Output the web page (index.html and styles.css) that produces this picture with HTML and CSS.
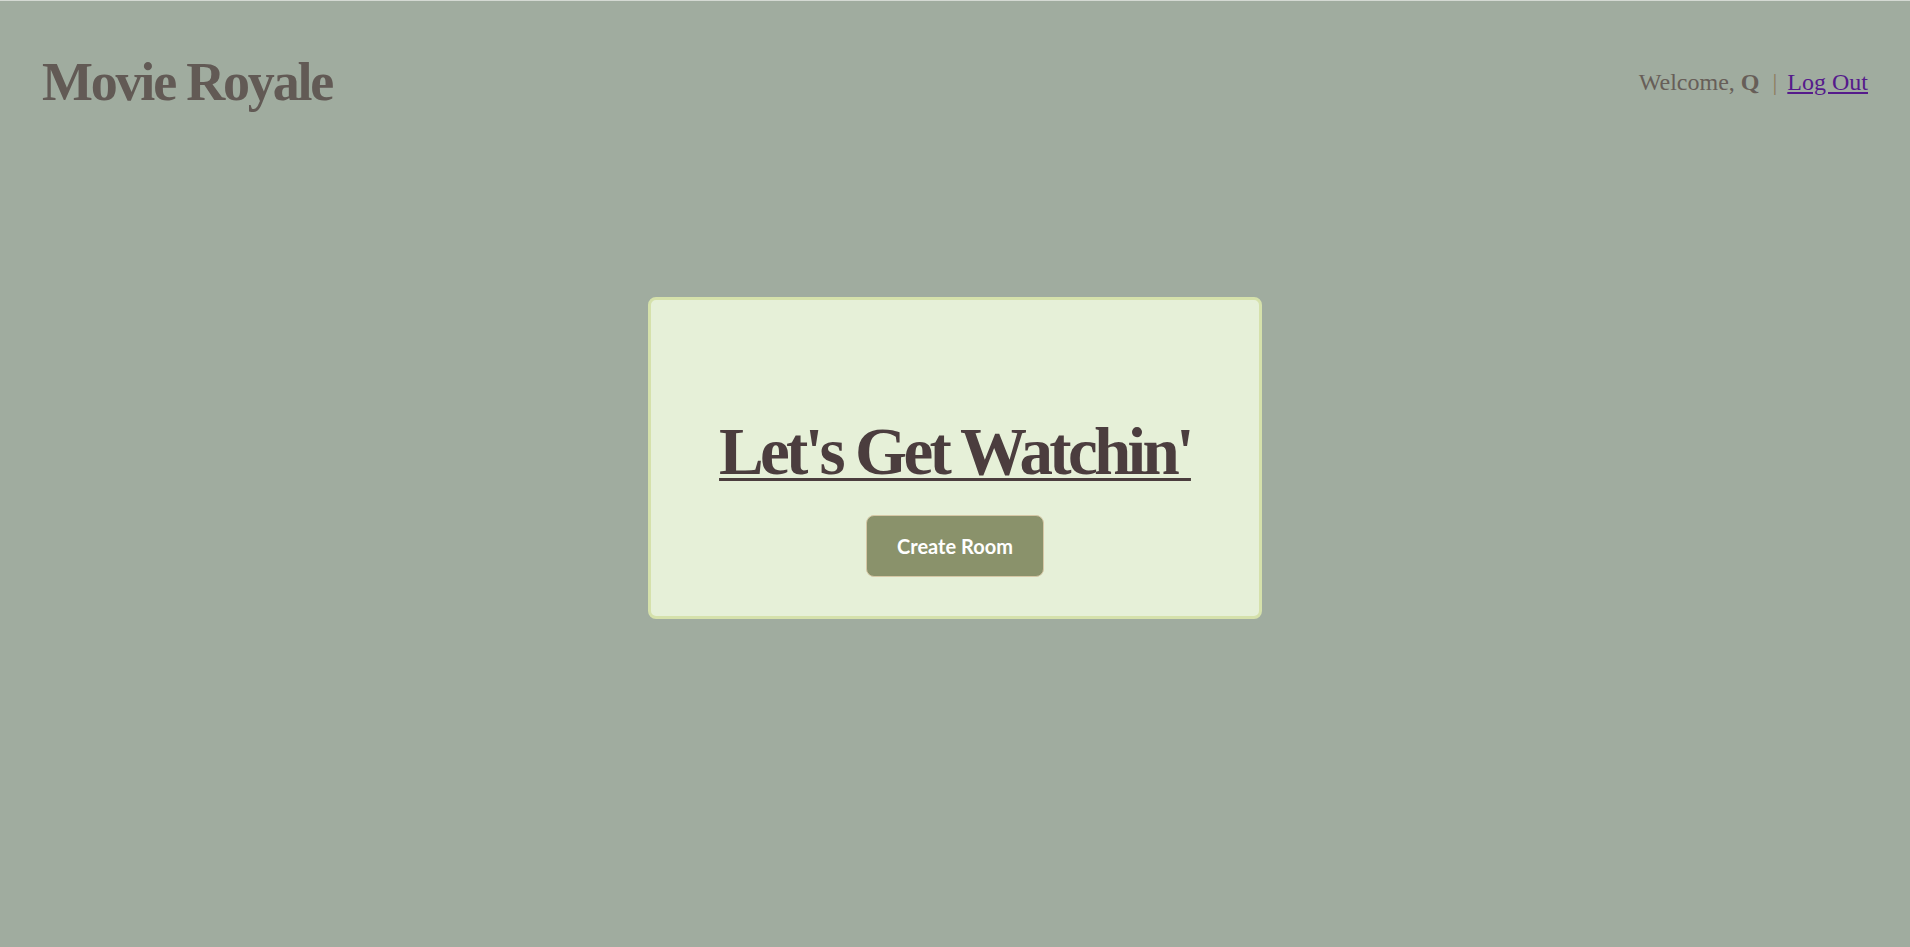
FILE: index.html
```html
<!DOCTYPE html>
<html lang="en">
<head>
<meta charset="utf-8">
<title>Movie Royale</title>
<link rel="stylesheet" href="styles.css">
</head>
<body>
<div class="topline"></div>
<header class="header">
  <h1 class="logo">Movie Royale</h1>
  <div class="welcome">Welcome, <b>Q</b><span class="sep">|</span><a href="#" class="logout">Log Out</a></div>
</header>
<main class="main">
  <section class="card">
    <h2 class="title">Let's Get Watchin'</h2>
    <button class="create">Create Room</button>
  </section>
</main>
</body>
</html>
```
FILE: styles.css
```css
html, body {
  margin: 0;
  padding: 0;
}
body {
  background: #a0ac9f;
  min-height: 947px;
  font-family: "Liberation Serif", "Times New Roman", serif;
}
.topline {
  height: 1px;
  background: #d4d9d3;
}
.header {
  display: flex;
  justify-content: space-between;
  align-items: center;
  padding: 49px 42px 0 42px;
}
.logo {
  margin: 0;
  font-family: "Liberation Serif", serif;
  font-weight: bold;
  font-size: 54px;
  line-height: 64px;
  letter-spacing: -2.2px;
  color: #625a55;
}
.welcome {
  font-size: 24px;
  line-height: 64px;
  color: #675e58;
}
.welcome b {
  font-weight: bold;
}
.sep {
  color: #8d7b5e;
  margin: 0 10px 0 13px;
}
.logout {
  color: #551a8b;
  text-decoration: underline;
}
.main {
  display: flex;
  justify-content: center;
  padding-top: 183px;
}
.card {
  box-sizing: border-box;
  width: 614px;
  height: 322px;
  background: #e6f0d8;
  border: 3px solid #d5e1ab;
  border-radius: 8px;
  display: flex;
  flex-direction: column;
  align-items: center;
  padding-top: 111px;
}
.title {
  margin: 0;
  font-family: "Liberation Serif", serif;
  font-weight: bold;
  font-size: 67px;
  line-height: 80px;
  letter-spacing: -3.7px;
  color: #4b3d3e;
  text-decoration: underline;
  text-decoration-thickness: 3px;
  text-underline-offset: 4px;
}
.create {
  margin-top: 24px;
  box-sizing: border-box;
  width: 178px;
  height: 62px;
  background: #8a926b;
  border: 1px solid #d6c8a6;
  border-radius: 8px;
  color: #ffffff;
  font-family: Lato, "Open Sans", sans-serif;
  font-weight: bold;
  font-size: 20px;
  cursor: pointer;
}
```
